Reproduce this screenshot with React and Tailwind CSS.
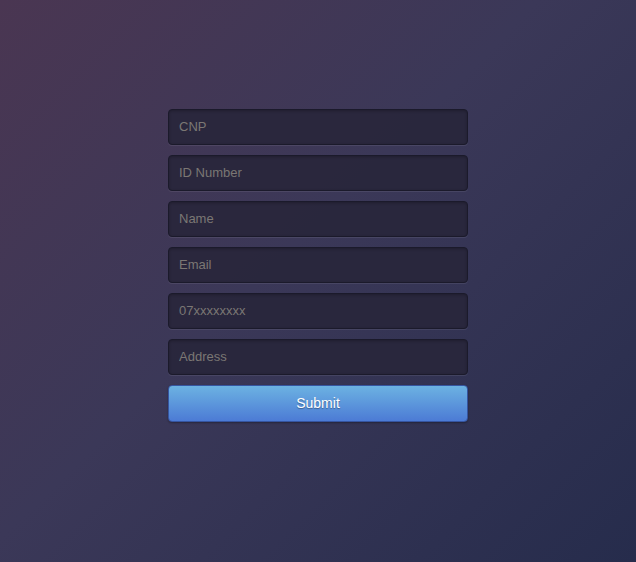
export default function App() {
  const fields = ["CNP", "ID Number", "Name", "Email", "07xxxxxxxx", "Address"];
  return (
    <div
      className="w-[636px] h-[562px] flex flex-col items-center pt-[109px] bg-[linear-gradient(135deg,#4a3652_0%,#3b3858_45%,#262c4c_100%)]"
      style={{ fontFamily: '"Liberation Sans", Arial, sans-serif' }}
    >
      <div className="w-[300px] flex flex-col gap-[10px]">
        {fields.map((f) => (
          <input
            key={f}
            placeholder={f}
            className="h-[36px] w-full rounded-[4px] border border-[#1b1a2b] bg-[#28263b]/90 px-[10px] pb-[1px] text-[13px] text-[#ccc] placeholder:text-[#7b7774] outline-none shadow-[inset_0_1px_3px_rgba(0,0,0,0.25),0_1px_0_rgba(255,255,255,0.08)]"
          />
        ))}
        <button className="h-[37px] w-full rounded-[4px] border border-[#3655a0] bg-[linear-gradient(to_bottom,#6cb2e2,#4c7bd5)] text-[14px] text-white [text-shadow:0_1px_1px_rgba(0,0,0,0.35)] shadow-[0_1px_2px_rgba(0,0,0,0.3)]">
          Submit
        </button>
      </div>
    </div>
  );
}
